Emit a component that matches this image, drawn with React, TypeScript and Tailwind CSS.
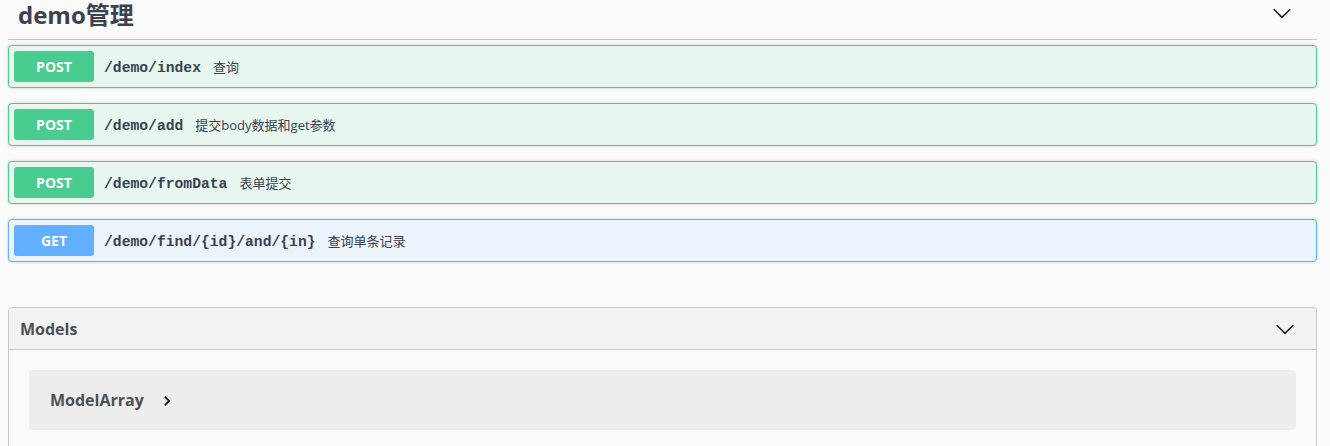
import React from "react";

const Arrow = ({ className }: { className?: string }) => (
  <svg viewBox="0 0 20 20" width={20} height={20} className={className} fill="#1b1b1b">
    <path d="M17.418 6.109c.272-.268.709-.268.979 0s.271.701 0 .969l-7.908 7.83c-.27.268-.707.268-.979 0l-7.908-7.83c-.27-.268-.27-.701 0-.969.271-.268.709-.268.979 0L10 13.25l7.418-7.141z" />
  </svg>
);

type Op = { method: "POST" | "GET"; path: string; desc: string };

const ops: Op[] = [
  { method: "POST", path: "/demo/index", desc: "查询" },
  { method: "POST", path: "/demo/add", desc: "提交body数据和get参数" },
  { method: "POST", path: "/demo/fromData", desc: "表单提交" },
  { method: "GET", path: "/demo/find/{id}/and/{in}", desc: "查询单条记录" },
];

const sans = "font-['Open_Sans','Noto_Sans_CJK_SC',sans-serif]";

function OpBlock({ op }: { op: Op }) {
  const post = op.method === "POST";
  return (
    <div
      className={`flex items-center h-[43px] mb-[15px] rounded-[4px] border px-[5px] shadow-[0_0_3px_rgba(0,0,0,0.19)] ${
        post ? "border-[#49cc90] bg-[#e8f6f0]" : "border-[#61affe] bg-[#ebf3fb]"
      }`}
    >
      <div
        className={`w-[80px] h-[31px] rounded-[3px] flex items-center justify-center text-white text-[14px] font-bold ${sans} ${
          post ? "bg-[#49cc90]" : "bg-[#61affe]"
        }`}
      >
        {op.method}
      </div>
      <span className="pl-[10px] pr-[12px] pt-[3px] font-['Liberation_Mono',monospace] font-bold text-[14.7px] text-[#3b4151]">
        {op.path}
      </span>
      <span className={`pt-[3px] text-[13px] text-[#3b4151] ${sans}`}>{op.desc}</span>
    </div>
  );
}

export default function App() {
  return (
    <div className="min-h-screen bg-[#fafafa] pl-[8px] pr-[13px]">
      <div className="flex items-start justify-between h-[40px] border-b border-[#c4c6cb] pl-[10px] pr-[25px]">
        <h3 className={`text-[24px] font-bold text-[#3b4151] leading-[30px] ${sans}`}>demo管理</h3>
        <Arrow className="mt-[3px]" />
      </div>
      <div className="pt-[5px]">
        {ops.map((op) => (
          <OpBlock key={op.path} op={op} />
        ))}
      </div>
      <div className="mt-[45px] border border-[#c8c8c8] rounded-[4px] h-[200px]">
        <div className="flex items-center justify-between h-[42px] bg-[#f3f3f3] border-b border-[#c8c8c8] rounded-t-[4px] pl-[11px] pr-[21px]">
          <h4 className={`text-[16px] font-bold text-[#505050] ${sans}`}>Models</h4>
          <Arrow />
        </div>
        <div className="px-[20px] pt-[20px]">
          <div className="h-[60px] rounded-[4px] bg-[#ededed] flex items-center pl-[21px]">
            <span className={`text-[16px] font-bold text-[#505050] ${sans}`}>ModelArray</span>
            <svg viewBox="0 0 24 24" width={20} height={20} className="ml-[13px] mt-[2px]" fill="#111">
              <path d="M10 6L8.59 7.41 13.17 12l-4.58 4.59L10 18l6-6z" />
            </svg>
          </div>
        </div>
      </div>
    </div>
  );
}
